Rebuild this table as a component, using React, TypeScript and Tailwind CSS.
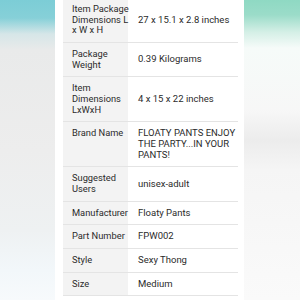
import React from "react";

type Row = { label: string[]; value: string[] };

const rows: Row[] = [
  { label: ["Item Package", "Dimensions L", "x W x H"], value: ["27 x 15.1 x 2.8 inches"] },
  { label: ["Package", "Weight"], value: ["0.39 Kilograms"] },
  { label: ["Item", "Dimensions", "LxWxH"], value: ["4 x 15 x 22 inches"] },
  { label: ["Brand Name"], value: ["FLOATY PANTS ENJOY", "THE PARTY...IN YOUR", "PANTS!"] },
  { label: ["Suggested", "Users"], value: ["unisex-adult"] },
  { label: ["Manufacturer"], value: ["Floaty Pants"] },
  { label: ["Part Number"], value: ["FPW002"] },
  { label: ["Style"], value: ["Sexy Thong"] },
  { label: ["Size"], value: ["Medium"] },
];

export default function App() {
  return (
    <div
      className="flex w-[300px] h-[300px] overflow-hidden bg-white text-[#2b2b2b]"
      style={{ fontFamily: 'Roboto, "Noto Sans", sans-serif' }}
    >
      {/* blurred backdrop, left */}
      <div className="w-[55px] shrink-0 bg-[linear-gradient(to_bottom,#7ccdd6_0px,#86d0d8_18px,#d6e6e8_34px,#e9eaea_50px,#ededed_150px,#eef1f2_230px,#f2f7fa_270px,#f7fafc_300px)]" />

      {/* details sheet */}
      <div className="w-[189px] shrink-0 bg-white pl-[8px] pr-[6px] overflow-hidden">
        <div className="-mt-[2px] flex flex-col">
          {rows.map((r) => (
            <div key={r.label.join(" ")} className="flex border-b border-[#e4e4e4]">
              <div className="w-[65px] shrink-0 bg-[#f3f3f3] pl-[9px] py-[6px] text-[9.3px] leading-[10.67px] whitespace-nowrap">
                {r.label.map((l) => (
                  <div key={l}>{l}</div>
                ))}
              </div>
              <div className="flex-1 flex flex-col justify-center pl-[10px] py-[6px] text-[9.5px] leading-[10.67px] whitespace-nowrap">
                {r.value.map((v) => (
                  <div key={v}>{v}</div>
                ))}
              </div>
            </div>
          ))}
        </div>
      </div>

      {/* blurred backdrop, right */}
      <div className="flex-1 bg-[linear-gradient(to_bottom,#8fd9c3_0px,#9bdcc9_15px,#d4efe6_32px,#f6fbf9_48px,#f7f7f7_110px,#ececec_140px,#f5f5f5_170px,#fafafa_300px)]" />
    </div>
  );
}
